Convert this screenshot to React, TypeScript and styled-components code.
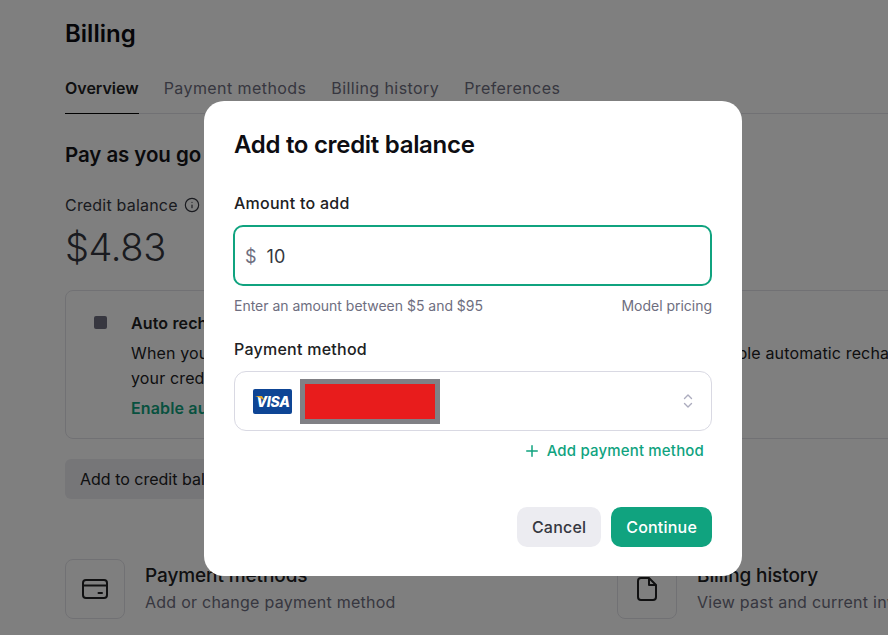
import React from 'react';
import styled, { createGlobalStyle } from 'styled-components';
import { Info, Plus } from 'lucide-react';

const GlobalStyle = createGlobalStyle`
  html, body {
    margin: 0;
    height: 100%;
    overflow: hidden;
    background: #fff;
    font-family: Inter, 'Noto Sans', sans-serif;
    -webkit-font-smoothing: auto;
  }
  * { box-sizing: border-box; }
`;

const Page = styled.main`
  width: 888px;
  height: 635px;
  padding: 18px 0 0 65px;
  overflow: hidden;
  color: #202123;
`;

const Title = styled.h1`
  margin: 0;
  font-size: 24px;
  line-height: 31px;
  font-weight: 600;
  letter-spacing: 0;
  color: #0d0d12;
`;

const Tabs = styled.nav`
  display: flex;
  gap: 25px;
  margin-top: 22px;
  height: 43px;
  border-bottom: 1px solid #e3e3e8;
`;

const Tab = styled.a<{ $active?: boolean }>`
  font-size: 16px;
  line-height: 20px;
  padding-top: 7px;
  height: 43px;
  letter-spacing: ${p => (p.$active ? '0' : '0.42px')};
  font-weight: ${p => (p.$active ? 600 : 400)};
  color: ${p => (p.$active ? '#202123' : '#6e6e80')};
  border-bottom: ${p => (p.$active ? '1px solid #000' : 'none')};
`;

const Section = styled.h2`
  margin: 27px 0 0;
  font-size: 20.5px;
  line-height: 28px;
  font-weight: 600;
  letter-spacing: -0.08px;
  color: #141418;
`;

const BalanceLabel = styled.div`
  display: flex;
  align-items: center;
  gap: 6px;
  margin-top: 25px;
  font-size: 16px;
  line-height: 22px;
  letter-spacing: 0.2px;
  color: #353740;
`;

const Balance = styled.div`
  margin-top: 7px;
  font-size: 38px;
  line-height: 48px;
  font-weight: 300;
  letter-spacing: -0.4px;
  color: #353740;
`;

const RechargeCard = styled.section`
  display: flex;
  gap: 24px;
  width: 900px;
  height: 149px;
  margin-top: 19px;
  padding: 21px 0 0 28px;
  border: 1px solid #e3e3e8;
  border-radius: 8px;
`;

const StopMark = styled.span`
  width: 13px;
  height: 13px;
  margin-top: 4px;
  border-radius: 2px;
  background: #6e6e80;
  flex: none;
`;

const RechargeBody = styled.div`
  font-size: 16px;
  line-height: 25px;
  letter-spacing: 0.14px;
  color: #202123;
`;

const RechargeTitle = styled.div`
  font-weight: 600;
  line-height: 22px;
  margin-bottom: 7px;
`;

const RechargeLine = styled.div`
  white-space: nowrap;
`;

const EnableLink = styled.div`
  margin-top: 5px;
  font-weight: 600;
  color: #10a37f;
`;

const SoftButton = styled.button`
  display: block;
  width: 200px;
  height: 40px;
  margin-top: 20px;
  padding: 0 15px;
  text-align: left;
  white-space: nowrap;
  border: 0;
  border-radius: 6px;
  background: #ececf1;
  font: 400 16px Inter, sans-serif;
  letter-spacing: 0;
  color: #202123;
`;

const Shortcuts = styled.div`
  display: grid;
  grid-template-columns: 552px 400px;
  margin-top: 60px;
`;

const Shortcut = styled.div`
  display: flex;
  gap: 20px;
`;

const ShortcutIcon = styled.div`
  display: flex;
  align-items: center;
  justify-content: center;
  width: 60px;
  height: 60px;
  border: 1px solid #e3e3e8;
  border-radius: 8px;
  color: #202123;
  flex: none;
`;

const ShortcutText = styled.div`
  padding-top: 4px;
  white-space: nowrap;
`;

const ShortcutTitle = styled.div`
  font-size: 19px;
  line-height: 26px;
  font-weight: 500;
  letter-spacing: -0.1px;
  color: #202123;
`;

const ShortcutNote = styled.div`
  margin-top: 1px;
  font-size: 16px;
  line-height: 24px;
  letter-spacing: 0.25px;
  color: #6e6e80;
`;

const Overlay = styled.div`
  position: fixed;
  inset: 0;
  padding: 101px 0 0 204px;
  background: rgba(0, 0, 0, 0.5);
`;

const Modal = styled.div`
  width: 538px;
  height: 475px;
  padding: 28px 30px 29px 30px;
  border-radius: 20px;
  background: #fff;
  color: #202123;
  display: flex;
  flex-direction: column;
`;

const ModalTitle = styled.h2`
  margin: 0;
  font-size: 24px;
  line-height: 31px;
  font-weight: 600;
  letter-spacing: -0.3px;
  color: #0d0d12;
`;

const FieldLabel = styled.div<{ $top: number }>`
  margin-top: ${p => p.$top}px;
  font-size: 16px;
  line-height: 22px;
  font-weight: 500;
  letter-spacing: 0.25px;
  color: #202123;
`;

const AmountInput = styled.div`
  display: flex;
  align-items: center;
  gap: 10px;
  height: 61px;
  margin: 11px 0 0 -1px;
  padding: 2px 0 0 10px;
  border: 2px solid #10a37f;
  border-radius: 10px;
  font-size: 18px;
  color: #353740;
`;

const Currency = styled.span`
  color: #6e6e80;
`;

const Hint = styled.div`
  display: flex;
  justify-content: space-between;
  margin-top: 10px;
  font-size: 14px;
  line-height: 20px;
  letter-spacing: -0.02px;
  color: #6e6e80;
`;

const MethodSelect = styled.div`
  display: flex;
  align-items: center;
  height: 60px;
  margin-top: 11px;
  padding: 0 16px 0 18px;
  border: 1px solid #d9d9e3;
  border-radius: 12px;
`;

const VisaBadge = styled.span`
  position: relative;
  display: flex;
  align-items: center;
  justify-content: center;
  width: 39px;
  height: 25px;
  padding-left: 1px;
  border-radius: 2px;
  background: #0e4595;
  color: #fff;
  font-size: 14px;
  font-weight: 800;
  font-style: italic;
  letter-spacing: -0.3px;
  flex: none;
`;

const VisaFlick = styled.svg`
  position: absolute;
  left: 2px;
  top: 7px;
`;

const Redaction = styled.div`
  width: 140px;
  height: 45px;
  margin-left: 8px;
  border: 5px solid #808085;
  background: #e81c1c;
`;

const Spinner = styled.svg`
  margin-left: auto;
  margin-right: 1px;
  color: #acacbe;
`;

const AddMethod = styled.a`
  display: flex;
  align-items: center;
  justify-content: flex-end;
  gap: 6px;
  margin: 10px 8px 0 0;
  font-size: 15px;
  line-height: 20px;
  font-weight: 500;
  letter-spacing: 0.17px;
  color: #10a37f;
`;

const Actions = styled.div`
  display: flex;
  justify-content: flex-end;
  gap: 10px;
  margin-top: auto;
`;

const ActionButton = styled.button<{ $primary?: boolean }>`
  height: 40px;
  padding: 0 15px;
  border: 0;
  border-radius: 10px;
  font: 500 16px Inter, sans-serif;
  letter-spacing: 0.2px;
  background: ${p => (p.$primary ? '#10a37f' : '#ececf1')};
  color: ${p => (p.$primary ? '#fff' : '#353740')};
`;

const CardIcon = () => (
  <svg width="26" height="22" viewBox="0 0 26 22" fill="none" stroke="currentColor" strokeWidth="2">
    <rect x="1" y="2" width="24" height="18" rx="3" />
    <path d="M1 7.5h24" />
    <path d="M16.5 15h3.5" strokeLinecap="round" />
  </svg>
);

const FileIcon = () => (
  <svg width="22" height="26" viewBox="0 0 22 26" fill="none" stroke="currentColor" strokeWidth="2" strokeLinejoin="round">
    <path d="M13 2H5a3 3 0 0 0-3 3v16a3 3 0 0 0 3 3h12a3 3 0 0 0 3-3V9z" />
    <path d="M13 2v7h7" />
  </svg>
);

export default function App() {
  return (
    <>
      <GlobalStyle />
      <Page>
        <Title>Billing</Title>
        <Tabs>
          <Tab $active>Overview</Tab>
          <Tab>Payment methods</Tab>
          <Tab>Billing history</Tab>
          <Tab>Preferences</Tab>
        </Tabs>
        <Section>Pay as you go</Section>
        <BalanceLabel>
          Credit balance <Info size={16} strokeWidth={1.75} />
        </BalanceLabel>
        <Balance>$4.83</Balance>
        <RechargeCard>
          <StopMark />
          <RechargeBody>
            <RechargeTitle>Auto recharge is off</RechargeTitle>
            <RechargeLine>
              When your credit balance reaches $0, your API requests will stop working. Enable automatic recharge
            </RechargeLine>
            <RechargeLine>your credit balance topped up.</RechargeLine>
            <EnableLink>Enable auto recharge</EnableLink>
          </RechargeBody>
        </RechargeCard>
        <SoftButton>Add to credit balance</SoftButton>
        <Shortcuts>
          <Shortcut>
            <ShortcutIcon>
              <CardIcon />
            </ShortcutIcon>
            <ShortcutText>
              <ShortcutTitle>Payment methods</ShortcutTitle>
              <ShortcutNote>Add or change payment method</ShortcutNote>
            </ShortcutText>
          </Shortcut>
          <Shortcut>
            <ShortcutIcon>
              <FileIcon />
            </ShortcutIcon>
            <ShortcutText>
              <ShortcutTitle>Billing history</ShortcutTitle>
              <ShortcutNote>View past and current invoices</ShortcutNote>
            </ShortcutText>
          </Shortcut>
        </Shortcuts>
      </Page>
      <Overlay>
        <Modal>
          <ModalTitle>Add to credit balance</ModalTitle>
          <FieldLabel $top={32}>Amount to add</FieldLabel>
          <AmountInput>
            <Currency>$</Currency>
            <span>10</span>
          </AmountInput>
          <Hint>
            <span>Enter an amount between $5 and $95</span>
            <span>Model pricing</span>
          </Hint>
          <FieldLabel $top={22}>Payment method</FieldLabel>
          <MethodSelect>
            <VisaBadge>
              VISA
              <VisaFlick width="10" height="5" viewBox="0 0 10 5">
                <path d="M0 0h7l3 5C8 3 4 1 0 0z" fill="#e9a82b" />
              </VisaFlick>
            </VisaBadge>
            <Redaction />
            <Spinner width="12" height="16" viewBox="0 0 12 16" fill="none" stroke="currentColor" strokeWidth="1.4" strokeLinecap="round" strokeLinejoin="round">
              <path d="M2.5 5.5 6 2l3.5 3.5" />
              <path d="M2.5 10.5 6 14l3.5-3.5" />
            </Spinner>
          </MethodSelect>
          <AddMethod>
            <Plus size={18} strokeWidth={2} />
            Add payment method
          </AddMethod>
          <Actions>
            <ActionButton>Cancel</ActionButton>
            <ActionButton $primary>Continue</ActionButton>
          </Actions>
        </Modal>
      </Overlay>
    </>
  );
}
